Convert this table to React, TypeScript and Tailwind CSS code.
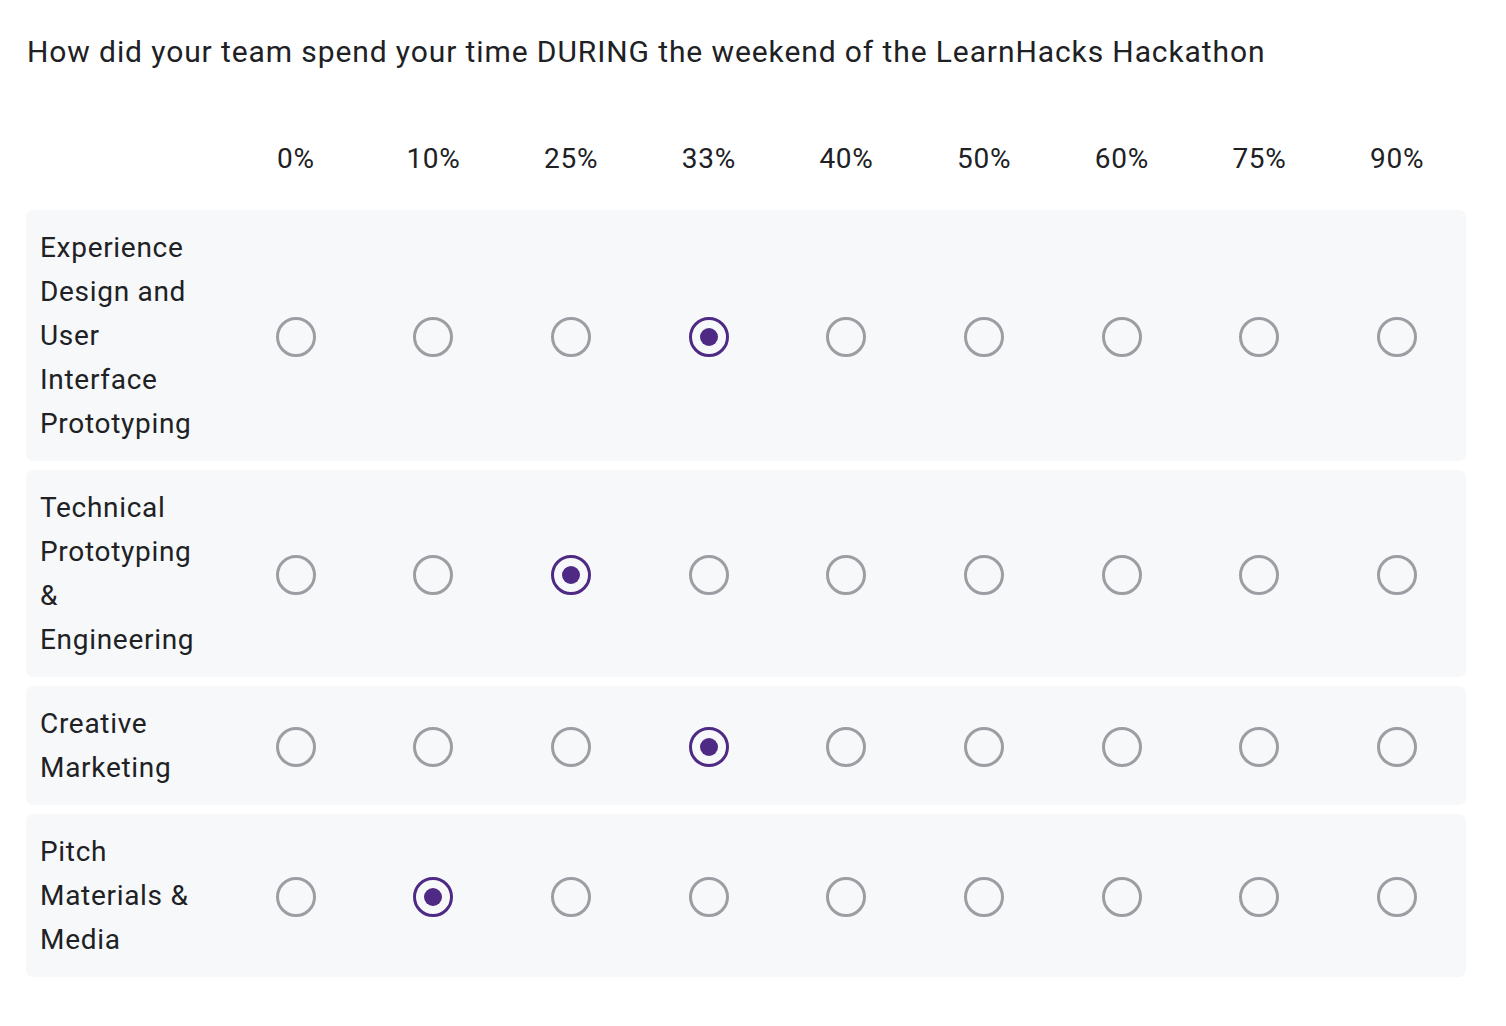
import React from "react";

const cols = ["0%", "10%", "25%", "33%", "40%", "50%", "60%", "75%", "90%"];
const rows: { label: string; sel: number }[] = [
  { label: "Experience Design and User Interface Prototyping", sel: 3 },
  { label: "Technical Prototyping & Engineering", sel: 2 },
  { label: "Creative Marketing", sel: 3 },
  { label: "Pitch Materials & Media", sel: 1 },
];

function Radio({ checked }: { checked: boolean }) {
  return checked ? (
    <div className="w-[40px] h-[40px] rounded-full border-[3px] border-[#4e2a84] flex items-center justify-center">
      <div className="w-[18px] h-[18px] rounded-full bg-[#4e2a84]" />
    </div>
  ) : (
    <div className="w-[40px] h-[40px] rounded-full border-[3px] border-[#9b9ea3]" />
  );
}

export default function App() {
  return (
    <div
      className="bg-white min-h-screen pl-[26px] pr-[40px] text-[#202124]"
      style={{ fontFamily: "Roboto, 'Noto Sans', sans-serif" }}
    >
      <div className="pt-[30px] text-[30px] leading-[44px] tracking-[0.9px] pl-[1px]">
        How did your team spend your time DURING the weekend of the LearnHacks Hackathon
      </div>
      <div className="grid grid-cols-[201px_repeat(9,1fr)] mt-[63px] mb-[29px] text-[28px] leading-[44px] tracking-[0.7px]">
        <div />
        {cols.map((c) => (
          <div key={c} className="text-center">
            {c}
          </div>
        ))}
      </div>
      <div className="flex flex-col gap-[9px]">
        {rows.map((r) => (
          <div
            key={r.label}
            className="grid grid-cols-[201px_repeat(9,1fr)] items-center bg-[#f7f8fa] rounded-[7px]"
          >
            <div className="pl-[14px] pr-[20px] pt-[16px] pb-[15px] text-[28px] leading-[44px] tracking-[0.7px]">
              {r.label}
            </div>
            {cols.map((c, i) => (
              <div key={c} className="flex justify-center pt-[2px]">
                <Radio checked={i === r.sel} />
              </div>
            ))}
          </div>
        ))}
      </div>
    </div>
  );
}
